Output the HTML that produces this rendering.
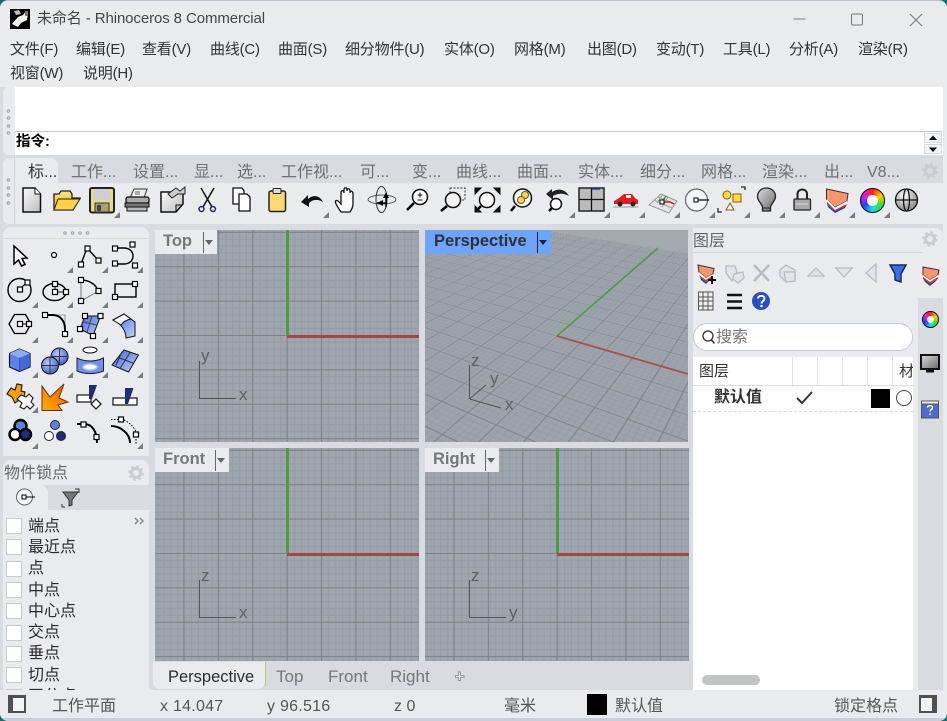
<!DOCTYPE html>
<html><head><meta charset="utf-8">
<style>
html,body{margin:0;padding:0;width:947px;height:721px;overflow:hidden;background:#1d6b6e}
*{box-sizing:border-box}
#w{position:absolute;left:0;top:0;width:947px;height:721px;background:#d8dbe0;border-radius:8px;overflow:hidden;font-family:"Liberation Sans","Noto Sans CJK SC",sans-serif;border-top:1px solid #b9c4d8}
.a{position:absolute}
.p{position:absolute;background:#e9ebef}
.t{position:absolute;white-space:nowrap;line-height:20px;height:20px;font-size:14px;color:#2a2a2a}
.m{color:#333;font-size:15px;letter-spacing:-.2px}
.tb{color:#707070;font-size:16px}
.l{font-size:16px;color:#2b2b2b}
.s{font-size:16px;color:#555}
.n{letter-spacing:.25px}
.cb{position:absolute;left:6px;width:16px;height:16px;background:#fff;border:1px solid #c5cada}
.v{position:absolute;overflow:hidden;background-color:#9ea5ad;
background-image:linear-gradient(90deg,#7f8389 1px,transparent 1px),linear-gradient(#7f8389 1px,transparent 1px),linear-gradient(90deg,#959ba3 1px,transparent 1px),linear-gradient(#959ba3 1px,transparent 1px);
background-size:34.4px 34.4px,34.4px 34.4px,6.88px 6.88px,6.88px 6.88px;
background-position:28.4px 0,0 1.8px,1.6px 0,0 1.8px}
.vt{position:absolute;left:0;top:0;height:24px;background:#e9ebef;font-weight:bold;font-size:16.500px;color:#777;line-height:23px;padding-left:8px}
.vt i{position:absolute;top:2px;width:1px;height:21px;background:#666}
.vt b{position:absolute;top:10px;width:0;height:0;border:4.500px solid transparent;border-top:5px solid #666;border-bottom:0}
.pg{position:absolute;left:-914px;top:-614.5px;width:1402px;height:1120px;transform-origin:1046px 720px;
transform:matrix3d(.3848,.1116,0,-.000478,-.2236,.1926,0,-.000825,0,0,1,0,0,0,0,1);
background:linear-gradient(90deg,#7e8389 2.5px,transparent 2.5px) 24.75px 0/60px 60px,linear-gradient(#7e8389 2.5px,transparent 2.5px) 0 -1.25px/60px 60px,linear-gradient(90deg,#91979f 1.2px,transparent 1.2px) 1.4px 0/12px 12px,linear-gradient(#91979f 1.2px,transparent 1.2px) 0 -.6px/12px 12px,#9ca3ab}
.ax{position:absolute;font-size:17px;line-height:20px;height:20px;color:#5e6266}
.gx{position:absolute;left:131px;top:0;width:2.5px;height:105px;background:#4d9b45}
.rx{position:absolute;left:132px;top:105px;width:132px;height:2.5px;background:#a14845}
.cw{position:absolute;border-radius:50%;background:conic-gradient(#ff2020,#ffd000,#30e030,#20e0e0,#2040ff,#e020e0,#ff2020)}
.cw:before{content:"";position:absolute;inset:0;border-radius:50%;border:1.5px solid #111}
.cw:after{content:"";position:absolute;inset:29%;border-radius:50%;background:#fff}
svg{position:absolute;left:0;top:-1px}
</style></head><body>
<div id="w">
<!-- title + menu -->
<div class="p" style="left:0;top:0;width:947px;height:86px"></div>
<div class="t" style="left:37px;top:8px;color:#444;font-size:15px;letter-spacing:-.1px">未命名 - Rhinoceros 8 Commercial</div>
<div class="t m" style="left:10px;top:39px">文件(F)</div>
<div class="t m" style="left:76px;top:39px">编辑(E)</div>
<div class="t m" style="left:142px;top:39px">查看(V)</div>
<div class="t m" style="left:210px;top:39px">曲线(C)</div>
<div class="t m" style="left:278px;top:39px">曲面(S)</div>
<div class="t m" style="left:345px;top:39px">细分物件(U)</div>
<div class="t m" style="left:444px;top:39px">实体(O)</div>
<div class="t m" style="left:514px;top:39px">网格(M)</div>
<div class="t m" style="left:587px;top:39px">出图(D)</div>
<div class="t m" style="left:656px;top:39px">变动(T)</div>
<div class="t m" style="left:723px;top:39px">工具(L)</div>
<div class="t m" style="left:789px;top:39px">分析(A)</div>
<div class="t m" style="left:858px;top:39px">渲染(R)</div>
<div class="t m" style="left:10px;top:63px">视窗(W)</div>
<div class="t m" style="left:83px;top:63px">说明(H)</div>

<!-- command -->
<div class="p" style="left:3px;top:86px;width:12px;height:68px;border-radius:6px 0 0 6px"></div>
<div class="a" style="left:15px;top:86px;width:928px;height:68px;background:#fff"></div>
<div class="p" style="left:943px;top:86px;width:4px;height:640px"></div>
<div class="a" style="left:15px;top:130px;width:928px;height:1px;background:#c3c6d6"></div>
<div class="t" style="left:16px;top:131px;font-weight:bold;color:#000;font-size:14.500px">指令:</div>
<div class="a" style="left:924px;top:132px;width:18px;height:10px;background:#f3f4f6;border:1px solid #d6d9e0"></div>
<div class="a" style="left:924px;top:143px;width:18px;height:10px;background:#f3f4f6;border:1px solid #d6d9e0"></div>

<!-- toolbar -->
<div class="a" style="left:15px;top:154px;width:928px;height:29px;background:#d8dbe0"></div>
<div class="p" style="left:3px;top:157px;width:12px;height:66px;border-radius:6px 0 0 6px"></div>
<div class="p" style="left:15px;top:182px;width:928px;height:41px"></div>
<div class="a" style="left:14px;top:157px;width:1px;height:66px;background:#d2d5db"></div>
<div class="p" style="left:15px;top:157px;width:43px;height:26px;border-radius:0 8px 0 0"></div>
<div class="t tb" style="left:28px;top:162px;color:#333">标...</div>
<div class="t tb" style="left:71px;top:162px">工作...</div>
<div class="t tb" style="left:133px;top:162px">设置...</div>
<div class="t tb" style="left:194px;top:162px">显...</div>
<div class="t tb" style="left:237px;top:162px">选...</div>
<div class="t tb" style="left:281px;top:162px">工作视...</div>
<div class="t tb" style="left:360px;top:162px">可...</div>
<div class="t tb" style="left:412px;top:162px">变...</div>
<div class="t tb" style="left:456px;top:162px">曲线...</div>
<div class="t tb" style="left:517px;top:162px">曲面...</div>
<div class="t tb" style="left:578px;top:162px">实体...</div>
<div class="t tb" style="left:640px;top:162px">细分...</div>
<div class="t tb" style="left:701px;top:162px">网格...</div>
<div class="t tb" style="left:762px;top:162px">渲染...</div>
<div class="t tb" style="left:824px;top:162px">出...</div>
<div class="t tb" style="left:867px;top:162px">V8...</div>

<!-- left panels -->
<div class="p" style="left:3px;top:226px;width:146px;height:229px;border-radius:8px 8px 0 0"></div>
<div class="a" style="left:3px;top:237px;width:146px;height:1px;background:#d8dbe0"></div>
<div class="p" style="left:3px;top:459px;width:146px;height:26px;border-radius:8px 8px 0 0"></div>
<div class="t" style="left:4px;top:463px;font-size:16px;color:#666">物件锁点</div>
<div class="a" style="left:3px;top:484px;width:146px;height:26px;background:#d8dbe0"></div>
<div class="p" style="left:3px;top:484px;width:45px;height:26px;border-radius:0 8px 0 0"></div>
<div class="p" style="left:3px;top:509px;width:146px;height:181px"></div>
<div class="cb" style="top:517px"></div><div class="t l" style="left:28px;top:516px">端点</div>
<div class="cb" style="top:538px"></div><div class="t l" style="left:28px;top:537px">最近点</div>
<div class="cb" style="top:560px"></div><div class="t l" style="left:28px;top:558px">点</div>
<div class="cb" style="top:581px"></div><div class="t l" style="left:28px;top:580px">中点</div>
<div class="cb" style="top:602px"></div><div class="t l" style="left:28px;top:601px">中心点</div>
<div class="cb" style="top:624px"></div><div class="t l" style="left:28px;top:622px">交点</div>
<div class="cb" style="top:645px"></div><div class="t l" style="left:28px;top:643px">垂点</div>
<div class="cb" style="top:666px"></div><div class="t l" style="left:28px;top:665px">切点</div>
<div class="cb" style="top:688px"></div><div class="t l" style="left:28px;top:686px">四分点</div>

<!-- viewports -->
<div class="v" style="left:155px;top:229px;width:264px;height:212px">
  <div class="gx"></div><div class="rx"></div>
  <div class="a" style="left:44px;top:131px;width:1px;height:38px;background:#555"></div>
  <div class="a" style="left:44px;top:168px;width:37px;height:1px;background:#555"></div>
  <div class="ax" style="left:46px;top:116px">y</div><div class="ax" style="left:84px;top:155px">x</div>
  <div class="vt" style="width:62px">Top<i style="left:48px"></i><b style="left:50px"></b></div>
</div>
<div class="v" style="left:155px;top:447px;width:264px;height:213px">
  <div class="gx"></div><div class="rx"></div>
  <div class="a" style="left:44px;top:132px;width:1px;height:38px;background:#555"></div>
  <div class="a" style="left:44px;top:169px;width:37px;height:1px;background:#555"></div>
  <div class="ax" style="left:46px;top:118px">z</div><div class="ax" style="left:84px;top:155px">x</div>
  <div class="vt" style="width:74px">Front<i style="left:60px"></i><b style="left:62px"></b></div>
</div>
<div class="v" style="left:425px;top:447px;width:264px;height:213px">
  <div class="gx"></div><div class="rx"></div>
  <div class="a" style="left:44px;top:132px;width:1px;height:38px;background:#555"></div>
  <div class="a" style="left:44px;top:169px;width:37px;height:1px;background:#555"></div>
  <div class="ax" style="left:46px;top:118px">z</div><div class="ax" style="left:84px;top:155px">y</div>
  <div class="vt" style="width:74px">Right<i style="left:60px"></i><b style="left:62px"></b></div>
</div>
<div class="a" style="left:425px;top:229px;width:263px;height:212px;overflow:hidden;background:#a3a9af">
  <div class="pg"></div>
  <svg width="263" height="212" style="left:0;top:0">
    <line x1="132" y1="106" x2="233" y2="18" stroke="#4f9e48" stroke-width="1.8"/>
    <line x1="132" y1="106" x2="263" y2="144" stroke="#a8504a" stroke-width="1.8"/>
    <path d="M44.500 135V169M44.500 169L61 155M44.500 169L76 178" stroke="#555" fill="none"/>
  </svg>
  <div class="ax" style="left:46px;top:121px">z</div><div class="ax" style="left:65px;top:139px">y</div><div class="ax" style="left:80px;top:165px">x</div>
  <div class="vt" style="width:126px;background:#6ea4fb;color:#2c3140;padding-left:9px">Perspective<i style="left:112px;background:#223"></i><b style="left:114px;border-top-color:#223"></b></div>
</div>

<!-- doc tabs -->
<div class="p" style="left:153px;top:661px;width:112px;height:27px;border-radius:0 0 7px 7px"></div>
<div class="a" style="left:265px;top:661px;width:1px;height:24px;background:#c9c96a"></div>
<div class="t l" style="left:168px;top:666px;font-size:16.500px">Perspective</div>
<div class="t l" style="left:276px;top:666px;color:#777;font-size:17px">Top</div>
<div class="t l" style="left:328px;top:666px;color:#777;font-size:17px">Front</div>
<div class="t l" style="left:390px;top:666px;color:#777;font-size:17px">Right</div>

<!-- right panel -->
<div class="p" style="left:693px;top:227px;width:250px;height:70px;border-radius:0 8px 0 0"></div>
<div class="p" style="left:693px;top:297px;width:225px;height:393px"></div>
<div class="a" style="left:918px;top:297px;width:25px;height:393px;background:#d8dbe0;border-radius:8px 0 0 0"></div>
<div class="a" style="left:693px;top:251px;width:229px;height:1px;background:#d4d7dc"></div>
<div class="t" style="left:693px;top:231px;font-size:16px;color:#666">图层</div>
<div class="a" style="left:693px;top:322px;width:220px;height:28px;background:#fff;border:1px solid #c5cad8;border-radius:14px"></div>
<div class="t" style="left:716px;top:327px;font-size:16px;color:#777">搜索</div>
<div class="a" style="left:693px;top:356px;width:220px;height:334px;background:#fff;overflow:hidden">
  <div class="a" style="left:0;top:28px;width:220px;height:1px;background:#d8dbe8"></div>
  <div class="a" style="left:99px;top:0;width:1px;height:28px;background:#e0e2e8"></div>
  <div class="a" style="left:124px;top:0;width:1px;height:28px;background:#e0e2e8"></div>
  <div class="a" style="left:149px;top:0;width:1px;height:28px;background:#e0e2e8"></div>
  <div class="a" style="left:174px;top:0;width:1px;height:28px;background:#e0e2e8"></div>
  <div class="a" style="left:199px;top:0;width:1px;height:28px;background:#e0e2e8"></div>
  <div class="t" style="left:6px;top:5px;font-size:15px;color:#333">图层</div>
  <div class="t" style="left:206px;top:5px;font-size:15px;color:#333">材</div>
  <div class="t" style="left:21px;top:31px;font-size:16px;font-weight:bold;color:#333">默认值</div>
  <div class="a" style="left:178px;top:32px;width:19px;height:19px;background:#000"></div>
  <div class="a" style="left:203px;top:33px;width:16px;height:16px;background:#fff;border:1px solid #444;border-radius:50%"></div>
  <div class="a" style="left:0;top:54px;width:220px;border-top:1px dashed #d8dbe0"></div>
  <div class="a" style="left:9px;top:318px;width:58px;height:10px;background:#c2c4c4;border-radius:5px"></div>
</div>

<!-- status -->
<div class="p" style="left:0;top:689px;width:943px;height:29px"></div>
<div class="a" style="left:0;top:717px;width:947px;height:4px;background:#c8cfdc"></div>
<div class="t s" style="left:52px;top:695.500px">工作平面</div>
<div class="t s n" style="left:160px;top:695.500px">x 14.047</div>
<div class="t s n" style="left:267px;top:695.500px">y 96.516</div>
<div class="t s" style="left:394px;top:695.500px">z 0</div>
<div class="t s" style="left:504px;top:695.500px">毫米</div>
<div class="a" style="left:587px;top:693px;width:20px;height:21px;background:#000"></div>
<div class="t s" style="left:615px;top:695.500px">默认值</div>
<div class="t s" style="left:834px;top:695.500px">锁定格点</div>

<!-- icons -->
<svg width="947" height="721" viewBox="0 0 947 721" fill="none">
<defs>
<rect id="s" x="-2.5" y="-2.500" width="5" height="5" fill="#fff" stroke="#000" stroke-width="1.2"/>
<path id="tr" d="M0 6L6 0V6Z" fill="#7b7b7b"/>
<g id="gear"><circle r="4.500" stroke="#c9ccd1" stroke-width="3"/><circle r="6.800" stroke="#c9ccd1" stroke-width="2" stroke-dasharray="2.600 2.740"/></g>
<linearGradient id="gd" x1="0" y1="0" x2="1" y2="1"><stop offset="0" stop-color="#fafafa"/><stop offset="1" stop-color="#bdbdbd"/></linearGradient>
<linearGradient id="gy" x1="0" y1="0" x2="0" y2="1"><stop offset="0" stop-color="#ffe88a"/><stop offset="1" stop-color="#f0a810"/></linearGradient>
<linearGradient id="gb" x1="0" y1="0" x2="1" y2="1"><stop offset="0" stop-color="#3e62d8"/><stop offset="1" stop-color="#c2d3fc"/></linearGradient>
<radialGradient id="gs" cx=".4" cy=".35" r=".7"><stop offset="0" stop-color="#b9ccfa"/><stop offset="1" stop-color="#3d5cc8"/></radialGradient>
<radialGradient id="gg" cx=".4" cy=".3" r=".8"><stop offset="0" stop-color="#fff"/><stop offset="1" stop-color="#777"/></radialGradient>
<linearGradient id="gl" x1="0" y1="0" x2="1" y2="1"><stop offset="0" stop-color="#dcdcdc"/><stop offset="1" stop-color="#6a6a6a"/></linearGradient>
<linearGradient id="go" x1="0" y1="1" x2="1" y2="0"><stop offset="0" stop-color="#ffb000"/><stop offset="1" stop-color="#f05800"/></linearGradient>
</defs>

<!-- logo -->
<rect x="10" y="9" width="20" height="20" fill="#000"/>
<path d="M12 24L18 17L23 15L26 11L28 13L27 20L21 23L18 27Z" fill="#f2f2f2"/><path d="M14 11L19 10L21 14L16 15Z" fill="#bbb"/><rect x="25" y="11" width="3" height="5" fill="#777"/>
<!-- win controls -->
<path d="M793.500 19H805.500" stroke="#7a7a7a"/>
<rect x="851.500" y="14" width="11" height="11" rx="1.500" stroke="#777"/>
<path d="M910 14L922 26M922 14L910 26" stroke="#777"/>

<!-- grips -->
<g stroke="#a8a8a8" fill="#d9dbdf"><circle cx="8.500" cy="111" r="1.300"/><circle cx="8.500" cy="118" r="1.300"/><circle cx="8.500" cy="126" r="1.300"/><circle cx="8.500" cy="133" r="1.300"/>
<circle cx="8.500" cy="180" r="1.300"/><circle cx="8.500" cy="188" r="1.300"/><circle cx="8.500" cy="195" r="1.300"/><circle cx="8.500" cy="203" r="1.300"/>
<circle cx="65" cy="233" r="1.300"/><circle cx="72.500" cy="233" r="1.300"/><circle cx="80" cy="233" r="1.300"/><circle cx="87.500" cy="233" r="1.300"/></g>

<!-- scroll arrows -->
<path d="M933 135.500L937 140H929Z M929 147.500H937L933 152Z" fill="#000"/>
<use href="#gear" x="930" y="171"/><use href="#gear" x="136" y="473"/><use href="#gear" x="930" y="239"/>

<!-- toolbar -->
<path d="M23 188H35L40.500 194V212H23Z" fill="url(#gd)" stroke="#111" stroke-width="1.500"/><path d="M35 188V194H40.500" fill="#fff" stroke="#111"/>
<path d="M54 210V194H59L61 191H70L72 194V198H78L80 198L73 210Z" fill="url(#gy)" stroke="#222" stroke-width="1.300"/><path d="M58 199H80L73 210H54Z" fill="#ffd24a" stroke="#222"/>
<rect x="90" y="188" width="24" height="24.500" rx="2" fill="#e9d890" stroke="#222" stroke-width="2"/><rect x="94" y="189" width="16" height="11" fill="#cfcfcf"/><rect x="95" y="203" width="14" height="9" fill="#b0a070" stroke="#333"/><rect x="97" y="205" width="4" height="6" fill="#444"/>
<path d="M130 198L134 189H147L144 198Z" fill="#eee" stroke="#333"/><rect x="135" y="191" width="5" height="4" fill="#aaa"/><rect x="126" y="197" width="23" height="6" rx="2" fill="#aaa" stroke="#111" stroke-width="1.300"/><rect x="125" y="203" width="24" height="4" fill="#777" stroke="#111"/><rect x="127" y="207" width="20" height="4" fill="#bbb" stroke="#111"/>
<path d="M161 192H183V204L176 212H161Z" fill="url(#gd)" stroke="#111" stroke-width="1.500"/><path d="M176 212V205H183" stroke="#111"/><path d="M168 194L176 188L180 191L185 187V194L178 194L172 198Z" fill="#ccc" stroke="#222"/>
<path d="M201 188L212 207M214 188L203 207" stroke="#111" stroke-width="1.500"/><circle cx="201.500" cy="209" r="2.500" stroke="#226" stroke-width="1.500"/><circle cx="213" cy="209" r="2.500" stroke="#226" stroke-width="1.500"/>
<path d="M233 188H242L244 191V204H233Z" fill="#fff" stroke="#111" stroke-width="1.300"/><path d="M239 194H247L250 197V211H239Z" fill="#fff" stroke="#111" stroke-width="1.300"/>
<rect x="269" y="191" width="16.500" height="20.500" rx="2" fill="#ffd873" stroke="#222" stroke-width="1.500"/><rect x="273" y="188.500" width="8" height="5" rx="1" fill="#ddd" stroke="#222"/>
<path d="M301 202L308 195V199C314 194 320 196 323 202C318 199 313 199 309 203V207Z" fill="#111"/>
<path d="M341 212C337 206 335 203 335.500 201C337 199 340 203 341 204V193C341 190 344 190 344 193V190C344 187 347 187 347 190V191C347 188 350 188 350 191V193C350 190 353 191 353 194V204C353 208 351 210 350 212Z" fill="#fff" stroke="#111" stroke-width="1.300"/>
<ellipse cx="382" cy="199.500" rx="14" ry="4.500" stroke="#555"/><ellipse cx="381.500" cy="199.500" rx="5.500" ry="13" stroke="#333"/><path d="M386 192L389 198H383ZM377 203L383 200V206Z" fill="#000"/><path d="M386 196V207M377 203L386 203" stroke="#000" stroke-width="1.500"/>
<circle cx="420" cy="197" r="7.500" fill="#fff" stroke="#111" stroke-width="1.500"/><path d="M414 203L407 210" stroke="#000" stroke-width="2.500"/><path d="M417.500 195H422.500M420 192.500V197.500M417.500 200H422.500" stroke="#111"/>
<rect x="450" y="188" width="15" height="12" stroke="#333" stroke-dasharray="2 1.500"/><circle cx="453" cy="200" r="7.500" fill="#f3f3f3" stroke="#111" stroke-width="1.500"/><path d="M447 206L441 211" stroke="#000" stroke-width="2.500"/>
<circle cx="487" cy="200" r="7.500" fill="#fff" stroke="#111" stroke-width="1.500"/><path d="M481 206L476 211" stroke="#000" stroke-width="2.500"/><path d="M475 194V188H481ZM494 188H500V194ZM500 206V212H494ZM475 206V212H481Z" fill="#111" stroke="#111"/>
<circle cx="522.500" cy="198" r="9" fill="#f4f4f4" stroke="#111" stroke-width="1.500"/><path d="M515 206L511 211" stroke="#000" stroke-width="2.500"/><circle cx="525" cy="195" r="3.500" fill="#ffd84a" stroke="#654"/><circle cx="521" cy="200" r="3.500" fill="#ffd84a" stroke="#654"/>
<circle cx="556" cy="204" r="5.500" fill="#fff" stroke="#111" stroke-width="1.500"/><path d="M552 208L549 211" stroke="#000" stroke-width="2.500"/><path d="M546 194L552 189V192C558 188 565 189 569 196C564 193 558 193 553 196V200Z" fill="#222"/>
<rect x="579" y="188" width="25" height="23" fill="#bbb" stroke="#222" stroke-width="1.500"/><path d="M591.500 188V211M579 199.500H604" stroke="#111" stroke-width="1.300"/><path d="M592 189H600" stroke="#2a3fa8" stroke-width="1.500"/>
<path d="M614 201L619 198L624 194H632L635 198L638 200V204H614Z" fill="#e02020"/><rect x="626" y="195" width="5" height="3" fill="#fff"/><circle cx="620" cy="204" r="2.500" fill="#222"/><circle cx="633" cy="204" r="2.500" fill="#222"/><path d="M613 207H638" stroke="#9a9a9a"/>
<path d="M649 205L661 194L677 201L669 213Z" fill="#e4e4e4" stroke="#9a9a9a"/><path d="M654 200L672 208M658 197L675 204M657 203L663 194M662 207L668 197" stroke="#a0a0a0"/><path d="M662 202H670L674 204" stroke="#d02020" stroke-width="1.500"/><path d="M662 202L666 196" stroke="#20a030" stroke-width="1.500"/><rect x="660" y="200" width="4" height="4" fill="#fff" stroke="#000"/>
<circle cx="696.500" cy="200" r="11" fill="#f4f5f7" stroke="#666" stroke-width="1.200"/><rect x="694" y="198" width="4" height="4" fill="#fff" stroke="#000"/><path d="M698 200H709" stroke="#000" stroke-width="1.200"/>
<circle cx="727" cy="195" r="4" fill="#ffdc3a" stroke="#8a5a10"/><rect x="733" y="194" width="8" height="8" fill="#ffdc3a" stroke="#8a5a10"/><path d="M730 203L734 210H726Z" stroke="#8a5a10" fill="#fff"/><path d="M741 187H745V190M718 208V212H722" stroke="#222" stroke-width="1.300"/>
<path d="M766.500 188C772 188 775.500 192 775.500 196.500C775.500 201 771.500 203 770.500 207V211H762.500V207C761.500 203 757.500 201 757.500 196.500C757.500 192 761 188 766.500 188Z" fill="url(#gl)" stroke="#222" stroke-width="1.300"/><path d="M762.500 208H770.500" stroke="#222"/>
<path d="M797.500 200V194C797.500 188 807 188 807 194V200" stroke="#222" stroke-width="2"/><rect x="794" y="199" width="16.500" height="11" rx="1" fill="#aaa" stroke="#222" stroke-width="1.300"/><path d="M796 204H808" stroke="#ddd"/>
<path d="M826.500 189L848 193.500L847 201L835 207.500L826.500 199Z" fill="#ff9470" stroke="#333"/><path d="M827 199L835 207.500L847 201V204L835 210L827 202Z" fill="#fff"/><path d="M827 202L835 210L846.500 204V206L835 211L827 204Z" fill="#d83020"/><path d="M827 204L835 211L846 206L845 208L835 213L828 207Z" fill="#2040a0"/>
<circle cx="906.500" cy="200" r="11" fill="url(#gg)" stroke="#111" stroke-width="1.300"/><path d="M895.500 200H917.500" stroke="#111" stroke-width="1.300"/><ellipse cx="906.500" cy="200" rx="3" ry="11" stroke="#111" stroke-width="1.300"/>
<use href="#tr" x="114" y="212"/><use href="#tr" x="323" y="212"/><use href="#tr" x="569" y="212"/><use href="#tr" x="604" y="212"/><use href="#tr" x="639" y="212"/><use href="#tr" x="674" y="212"/><use href="#tr" x="709" y="212"/><use href="#tr" x="744" y="212"/><use href="#tr" x="779" y="212"/><use href="#tr" x="814" y="212"/><use href="#tr" x="849" y="212"/><use href="#tr" x="884" y="212"/>

<!-- left icons row 1 -->
<path d="M14 246V264L18.500 260L21.500 266L25 264.500L22 258.500L27 258Z" fill="#fff" stroke="#000" stroke-width="1.500"/>
<circle cx="54" cy="255" r="2.500" fill="#fff" stroke="#000" stroke-width="1.200"/>
<path d="M81 264L87 248L99 261" stroke="#000" stroke-width="1.400"/><use href="#s" x="81" y="264.500"/><use href="#s" x="87.500" y="248.500"/><use href="#s" x="98.500" y="260.500"/>
<path d="M115 248H124C136 248 136 264 124 264H115" stroke="#000" stroke-width="1.400"/><use href="#s" x="115" y="248.500"/><use href="#s" x="132.500" y="244.500"/><use href="#s" x="135" y="265.500"/><use href="#s" x="115" y="263.500"/>
<!-- row 2 -->
<circle cx="19.500" cy="290" r="11.500" stroke="#000" stroke-width="1.400"/><path d="M20 289L27 282" stroke="#000"/><use href="#s" x="20" y="289.500"/><use href="#s" x="27.500" y="282.500"/>
<ellipse cx="54.500" cy="292" rx="11.500" ry="8.500" stroke="#000" stroke-width="1.400"/><path d="M55 284V292H66" stroke="#000"/><use href="#s" x="55" y="284"/><use href="#s" x="55" y="292"/><use href="#s" x="66" y="292"/>
<path d="M81 280V301L98.500 291" stroke="#777"/><path d="M81 280C90 280 96 285 98.500 291" stroke="#000" stroke-width="1.400"/><use href="#s" x="81" y="280"/><use href="#s" x="98.500" y="291"/><use href="#s" x="81" y="301"/>
<rect x="115" y="284" width="21" height="13" stroke="#000" stroke-width="1.400"/><use href="#s" x="115" y="297"/><use href="#s" x="135" y="284"/>
<!-- row 3 -->
<path d="M9 324L14.500 314.500H25.500L31 324L25.500 333.500H14.500Z" stroke="#000" stroke-width="1.300"/><path d="M20 324H29" stroke="#000"/><use href="#s" x="20" y="324"/><use href="#s" x="29" y="324"/>
<path d="M55 315H65V334" stroke="#999"/><path d="M45 315H53C60 315 65 321 65 329V334" stroke="#000" stroke-width="2"/><use href="#s" x="45" y="315"/><use href="#s" x="65" y="334"/>
<path d="M85 316L100.500 316L93 335.500L80 329Z" fill="url(#gb)" stroke="#111"/><path d="M92 316L87 332M83 322L97 325" stroke="#445"/><use href="#s" x="85" y="316"/><use href="#s" x="100.500" y="316"/><use href="#s" x="80" y="329"/><use href="#s" x="93" y="336"/>
<path d="M113 320L124 314L135 322V336L126 338C126 330 120 323 113 320Z" fill="url(#gb)" stroke="#111"/><path d="M113 320L124 314L131 319C126 320 123 322 121 325Z" fill="#fff" stroke="#111"/>
<!-- row 4 -->
<path d="M19.500 349L30 353.500V367L19.500 371.500L9.500 367V353.500Z" fill="#5a82ea" stroke="#112" stroke-width="1.200"/><path d="M9.500 353.500L19.500 358L30 353.500L19.500 349Z" fill="#8fadf6"/><path d="M19.500 358V371.500" stroke="#3050b0"/><path d="M19.500 358L30 353.500V367L19.500 371.500Z" fill="#3f63c9" opacity=".8"/>
<circle cx="59.500" cy="356.500" r="8.500" fill="url(#gs)" stroke="#112"/><circle cx="50" cy="365.500" r="8.500" fill="url(#gs)" stroke="#112"/><path d="M59.500 348V365M51 356.500H68M50 357V374M41.500 365.500H58.500" stroke="#334"/>
<ellipse cx="90" cy="350" rx="7" ry="3" fill="#fff" stroke="#111"/><path d="M77 358C85 362 95 362 103.500 358V371C95 374.500 85 374.500 77 371Z" fill="#6d92ee" stroke="#222"/><ellipse cx="90" cy="367" rx="7" ry="3" fill="#fff" stroke="#b8c6f0" stroke-width="1.500"/>
<path d="M124 350L138.500 355L128.500 372L112 365Z" fill="url(#gb)" stroke="#111"/><path d="M118 357.500L133 363M130 352.500L120 368.500M122 351.500L116 365" stroke="#334"/>
<!-- row 5 -->
<path d="M7 394L11 388L15 390L17 384L22 385L21 391L25 392L24 397L20 399L15 403L12 397Z" fill="#ffa010" stroke="#222" stroke-width="1.200"/>
<path d="M17 399L21 395L26 397L29 394L33 398L31 402L34 405L30 409L27 406L24 409L20 407L22 403Z" fill="#fff" stroke="#222" stroke-width="1.200"/>
<path d="M42 410.500V386L50 397L64 384L59 398L68 402L58 405L62 410.500Z" fill="url(#go)" stroke="#6a3300"/>
<rect x="77" y="395" width="14" height="7" fill="#fff" stroke="#222" stroke-width="1.300"/><path d="M89 385H97L92 399H89Z" fill="#1d2d78"/><path d="M91 404L96 399L101 404L96 409Z" fill="#fff" stroke="#222" stroke-width="1.300"/>
<rect x="113" y="398" width="24" height="7" fill="#fff" stroke="#222" stroke-width="1.300"/><path d="M125 388H133.500L128 404H125Z" fill="#1d2d78"/>
<!-- row 6 -->
<circle cx="20.500" cy="426" r="6" fill="#5c7fe0" stroke="#000" stroke-width="2.500"/><circle cx="15" cy="434.500" r="5.500" fill="#fff" stroke="#000" stroke-width="2.500"/><circle cx="25.500" cy="434.500" r="5.500" fill="#1d2d78" stroke="#000" stroke-width="2.500"/>
<circle cx="55" cy="425" r="4.500" fill="#5c7fe0" stroke="#223"/><circle cx="49" cy="436" r="4.500" fill="#fff" stroke="#223"/><circle cx="61" cy="436" r="4.500" fill="#1d2d78" stroke="#223"/>
<path d="M77 424H84C92 424 97 431 97 443" stroke="#000" stroke-width="2"/><use href="#s" x="83.500" y="424.500"/><use href="#s" x="96.500" y="437"/>
<path d="M111 426C121 426 130 434 130 443" stroke="#000" stroke-width="2"/><path d="M111 419.500H120M124 420C130 423 134 427 136 432M136 436V444" stroke="#000" stroke-dasharray="1.500 1.500"/><use href="#s" x="121" y="419.500"/><use href="#s" x="136" y="434.500"/>
<use href="#tr" x="67" y="267"/><use href="#tr" x="102" y="267"/><use href="#tr" x="137" y="267"/>
<use href="#tr" x="32" y="302"/><use href="#tr" x="67" y="302"/><use href="#tr" x="102" y="302"/><use href="#tr" x="137" y="302"/>
<use href="#tr" x="32" y="337"/><use href="#tr" x="67" y="337"/><use href="#tr" x="102" y="337"/><use href="#tr" x="137" y="337"/>
<use href="#tr" x="32" y="372"/><use href="#tr" x="67" y="372"/><use href="#tr" x="102" y="372"/><use href="#tr" x="137" y="372"/>
<use href="#tr" x="32" y="407"/>
<use href="#tr" x="32" y="443"/><use href="#tr" x="137" y="443"/>

<!-- osnap tabs -->
<circle cx="24.500" cy="497" r="8" stroke="#666" fill="#f4f5f7"/><rect x="22" y="495" width="4" height="4" fill="#fff" stroke="#000"/><path d="M26 497H35" stroke="#000"/>
<path d="M63 492H78L72 500V505L69 506V500Z" fill="#777" stroke="#333"/><path d="M62 504V507H65M75 489H79V493" stroke="#333"/>
<path d="M135 518L138 521L135 524M140 518L143 521L140 524" stroke="#888" stroke-width="1.500"/>
<!-- doc plus -->
<path d="M459.500 671.500V681M455 676.500H464.500" stroke="#8a8a8a" stroke-width="2.500"/><path d="M459.500 672.500V680M456 676.500H463.500" stroke="#e9ebef"/>
<!-- right panel icons -->
<path d="M698 265L714 268.500L713 274L706 278L699 272Z" fill="#ff9470" stroke="#333"/><path d="M699 272L706 278L713 274L712 276L706 280L699 275Z" fill="#fff"/><path d="M699 275L706 280L712 276V278L706 282L700 277Z" fill="#d83020"/><path d="M700 277L706 282L710 280L706 284L701 280Z" fill="#2040a0"/><path d="M712 276V284M708 280H716" stroke="#000" stroke-width="2"/>
<g stroke="#b8bbc0" stroke-width="1.300" fill="#e2e4e8"><path d="M726 266H735L737 272L732 281L726 273Z"/><path d="M734 274L743 272L744 278L738 283L733 279Z"/><path d="M754 265L769 281M769 265L754 281" stroke-width="2.500"/><path d="M780 270L786 265L795 270V279L786 282L780 276Z"/><path d="M784 272H795V281L786 282Z"/><path d="M808 276L816 268L824 276Z"/><path d="M836 268H852L844 277Z"/><path d="M876 264V282L866 273Z"/></g>
<path d="M890 265H906L901 274V282L895 280V274Z" fill="#3b6fe0" stroke="#112a70" stroke-width="1.500"/>
<path d="M923 267L939 270L938 275L930 280L923 275Z" fill="#ff9470" stroke="#333"/><path d="M923 275L930 280L938 275V277L930 282L923 277Z" fill="#fff"/><path d="M923 277L930 282L938 277V279L930 284L923 279Z" fill="#d83020"/><path d="M923.500 279L930 284L937 279.500L936 281L930 286L925 282Z" fill="#2040a0"/>
<g stroke="#555"><rect x="698.500" y="292" width="14.500" height="18" fill="#eee"/><path d="M703 292V310M708 292V310M698.500 297H713M698.500 301H713M698.500 306H713"/></g>
<path d="M727 295H742M727 301.500H742M727 308H742" stroke="#111" stroke-width="2.500"/>
<circle cx="761" cy="301" r="9" fill="#2a4ec4"/>
<path d="M758 298.500C758 295 764.500 295 764.500 298.500C764.500 301 761.500 301 761.500 303.500" stroke="#fff" stroke-width="2"/><circle cx="761.500" cy="306" r="1.300" fill="#fff"/>
<circle cx="708" cy="336" r="5" stroke="#333" stroke-width="1.300"/><path d="M711.500 340L714.500 343.500" stroke="#333" stroke-width="1.500"/>
<path d="M797 398L802 403L812 392" stroke="#333" stroke-width="2"/>
<!-- side tab icons -->
<rect x="921" y="355" width="18" height="14" fill="url(#gl)" stroke="#111" stroke-width="2"/><path d="M926 371H934" stroke="#111" stroke-width="3"/>
<rect x="921.500" y="401" width="17" height="17" fill="#4a6fd0" stroke="#555"/><rect x="921.500" y="401" width="17" height="3" fill="#eee" stroke="#555"/><path d="M927.500 407.500C927.500 405 932.500 405 932.500 407.500C932.500 409.500 930 409.500 930 411.500M930 413.500V415" stroke="#fff" stroke-width="1.500"/>
<!-- status icons -->
<rect x="8" y="695" width="18" height="18" fill="#505050"/><rect x="13" y="698" width="11" height="13" fill="#f4f5f7"/>
<rect x="919" y="695" width="18" height="18" fill="#505050"/><rect x="921" y="698" width="11" height="13" fill="#f4f5f7"/>
</svg>
<div class="cw" style="left:860px;top:187px;width:25px;height:25px"></div>
<div class="cw" style="left:922px;top:310px;width:17px;height:17px"></div>
</div>
</body></html>
